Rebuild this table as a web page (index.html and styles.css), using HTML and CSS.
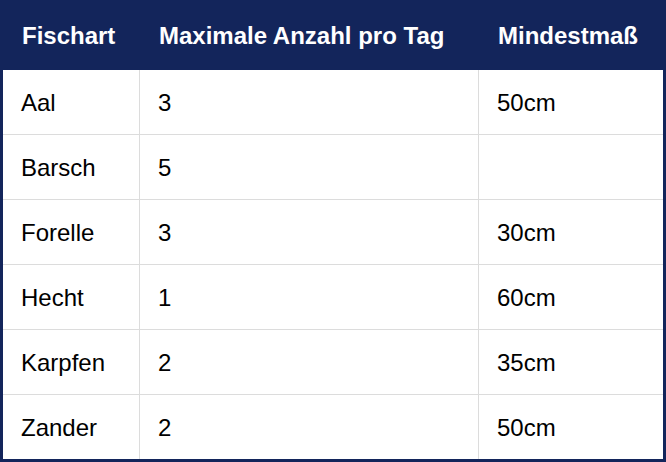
FILE: index.html
```html
<!DOCTYPE html>
<html lang="de">
<head>
<meta charset="utf-8">
<title>Fischarten</title>
<link rel="stylesheet" href="styles.css">
</head>
<body>
<div class="wrap">
<table class="fish">
  <colgroup>
    <col class="c1">
    <col class="c2">
    <col class="c3">
  </colgroup>
  <thead>
    <tr><th>Fischart</th><th>Maximale Anzahl pro Tag</th><th>Mindestmaß</th></tr>
  </thead>
  <tbody>
    <tr><td>Aal</td><td>3</td><td>50cm</td></tr>
    <tr><td>Barsch</td><td>5</td><td></td></tr>
    <tr><td>Forelle</td><td>3</td><td>30cm</td></tr>
    <tr><td>Hecht</td><td>1</td><td>60cm</td></tr>
    <tr><td>Karpfen</td><td>2</td><td>35cm</td></tr>
    <tr><td>Zander</td><td>2</td><td>50cm</td></tr>
  </tbody>
</table>
</div>
</body>
</html>
```
FILE: styles.css
```css
html, body {
  margin: 0;
  padding: 0;
  background: #ffffff;
}
.wrap {
  width: 666px;
  height: 462px;
  box-sizing: border-box;
  border: 3px solid #13255b;
  border-top: 0;
  background: #ffffff;
}
.fish {
  width: 660px;
  border-collapse: separate;
  border-spacing: 0;
  table-layout: fixed;
  font-family: "Liberation Sans", Arial, sans-serif;
  font-size: 24px;
  color: #000000;
}
.c1 { width: 136px; }
.c2 { width: 339px; }
.c3 { width: 185px; }
.fish th {
  background: #13255b;
  color: #ffffff;
  font-weight: bold;
  text-align: left;
  height: 70px;
  padding: 2px 0 0 19px;
  box-sizing: border-box;
  vertical-align: middle;
}
.fish th + th {
  padding-left: 20px;
}
.fish td {
  height: 63px;
  padding: 1px 0 0 18px;
  box-sizing: content-box;
  vertical-align: middle;
  border-top: 1px solid #dcdcdc;
}
.fish tbody tr:first-child td {
  border-top: 0;
}
.fish td + td {
  border-left: 1px solid #dcdcdc;
}
```
